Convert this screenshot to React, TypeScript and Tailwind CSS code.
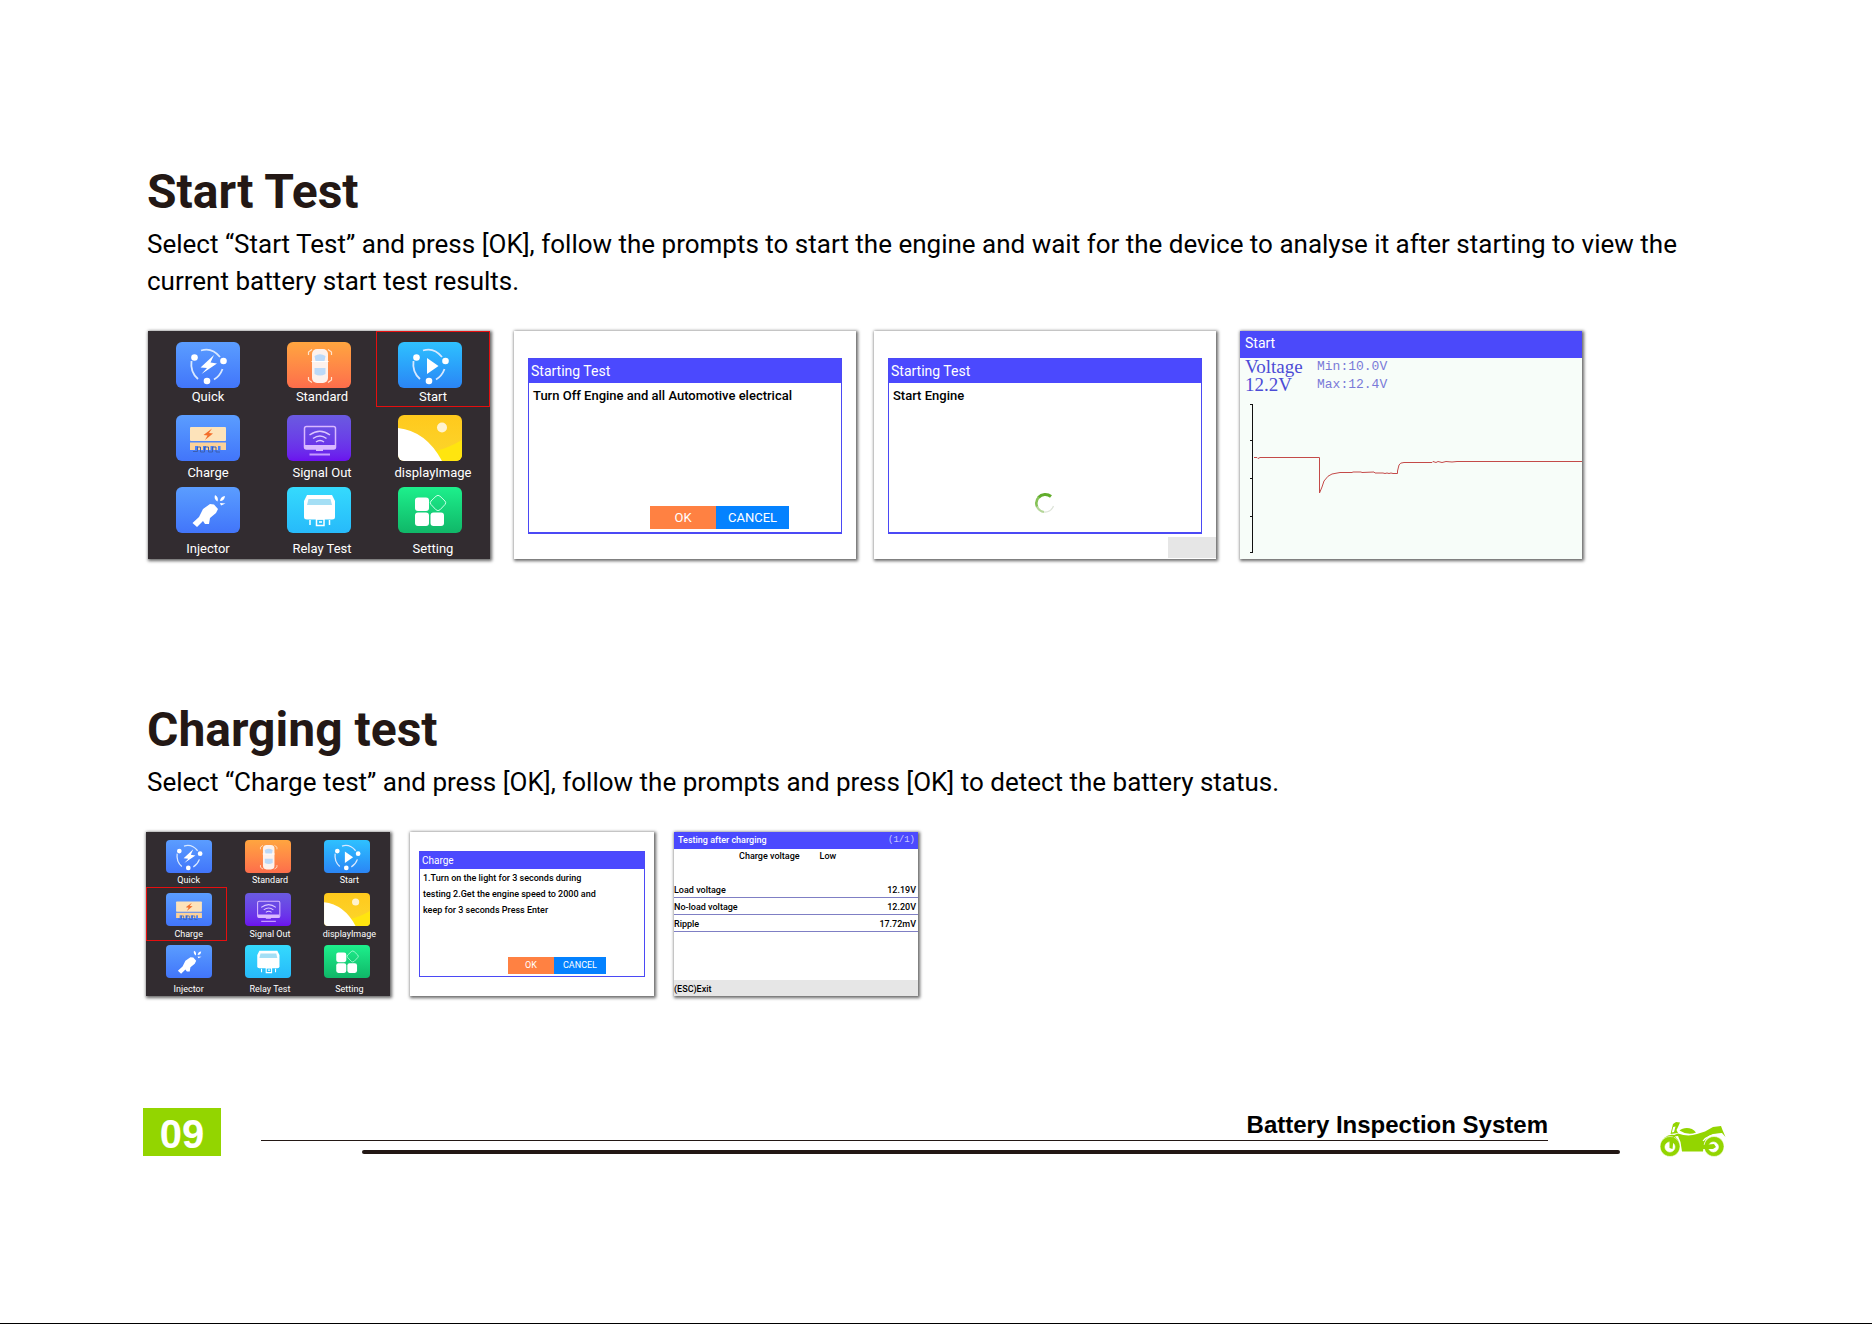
import type { ReactNode } from "react";
import clsx from "clsx";

type Size = "lg" | "sm";

export default function App() {
  return (
    <div className="flex min-h-screen flex-col border-b border-black bg-white font-['Roboto',sans-serif] text-black">
      <main className="px-[147px] pt-[162px]">
        <section>
          <Heading>Start Test</Heading>
          <Paragraph>
            Select “Start Test” and press [OK], follow the prompts to start the engine and wait for
            the device to analyse it after starting to view the current battery start test results.
          </Paragraph>
          <div className="mt-[31px] ml-px flex flex-wrap gap-6">
            <MenuScreen size="lg" selected="Start" />
            <div className="flex gap-[18px]">
              <DialogScreen size="lg" title="Starting Test" actions>
                Turn Off Engine and all Automotive electrical
              </DialogScreen>
              <DialogScreen size="lg" title="Starting Test" busy>
                Start Engine
              </DialogScreen>
            </div>
            <ChartScreen />
          </div>
        </section>

        <section className="mt-[141px]">
          <Heading>Charging test</Heading>
          <Paragraph>
            Select “Charge test” and press [OK], follow the prompts and press [OK] to detect the
            battery status.
          </Paragraph>
          <div className="mt-[31px] -ml-px flex flex-wrap gap-5">
            <MenuScreen size="sm" selected="Charge" />
            <DialogScreen size="sm" title="Charge" actions>
              1.Turn on the light for 3 seconds during
              <br />
              testing 2.Get the engine speed to 2000 and
              <br />
              keep for 3 seconds Press Enter
            </DialogScreen>
            <ResultScreen />
          </div>
        </section>
      </main>
      <PageFooter />
    </div>
  );
}

function Heading({ children }: { children: ReactNode }) {
  return <h2 className="text-[48px] leading-[60px] font-bold text-[#231815]">{children}</h2>;
}

function Paragraph({ children }: { children: ReactNode }) {
  return <p className="mt-1 text-[26px] leading-[37px]">{children}</p>;
}

function Screen({
  size,
  className,
  children
}: {
  size: Size;
  className?: string;
  children: ReactNode;
}) {
  return (
    <div
      className={clsx(
        "flex shrink-0 flex-col shadow-[1px_1px_3px_1px_rgba(0,0,0,0.6)]",
        size === "lg" ? "h-[228px] w-[342px]" : "h-[164px] w-[244px]",
        className
      )}
    >
      {children}
    </div>
  );
}

const TILES = [
  { label: "Quick", bg: "bg-linear-to-b from-[#5b9dff] to-[#4275fa]", art: <QuickArt /> },
  { label: "Standard", bg: "bg-linear-to-b from-[#ffa53f] to-[#fd6d4b]", art: <CarArt /> },
  { label: "Start", bg: "bg-linear-to-b from-[#2fc1ff] to-[#2b85f5]", art: <StartArt /> },
  { label: "Charge", bg: "bg-linear-to-b from-[#5b9dff] to-[#4275fa]", art: <ChargeArt /> },
  { label: "Signal Out", bg: "bg-linear-to-b from-[#6a5ae0] to-[#6b10ee]", art: <SignalArt /> },
  { label: "displayImage", bg: "bg-linear-to-b from-[#ffc91c] to-[#fbd62c]", art: <ImageArt /> },
  { label: "Injector", bg: "bg-linear-to-b from-[#5b9dff] to-[#4275fa]", art: <InjectorArt /> },
  { label: "Relay Test", bg: "bg-linear-to-b from-[#35dafd] to-[#27bafa]", art: <RelayArt /> },
  { label: "Setting", bg: "bg-linear-to-b from-[#1df08c] to-[#10b768]", art: <SettingArt /> }
];

// The device nudges each row and column of its grid a little towards the middle.
const ROW_PAD = {
  lg: ["pt-[11px]", "pt-2", "pt-1"],
  sm: ["pt-2", "pt-1.5", "pt-1"]
};
const COLUMN_PAD = {
  lg: ["pl-1.5", "", "pr-1.5"],
  sm: ["pl-1", "", "pr-1"]
};

function MenuScreen({ size, selected }: { size: Size; selected: string }) {
  const lg = size === "lg";
  return (
    <Screen size={size} className="bg-[#322c30]">
      <div className="grid flex-1 grid-cols-3 grid-rows-3">
        {TILES.map((tile, i) => (
          <button
            key={tile.label}
            type="button"
            className={clsx(
              "flex min-w-0 flex-col items-center outline-1 -outline-offset-1",
              tile.label === selected ? "outline-[#e60f0f]" : "outline-transparent",
              ROW_PAD[size][Math.floor(i / 3)],
              COLUMN_PAD[size][i % 3]
            )}
          >
            <span
              className={clsx(
                "block shrink-0 overflow-hidden",
                lg ? "h-[46px] w-16 rounded-md" : "h-[33px] w-[46px] rounded-sm",
                tile.bg
              )}
            >
              <svg viewBox="0 0 64 46" className="block size-full" aria-hidden="true">
                {tile.art}
              </svg>
            </span>
            <span
              className={clsx(
                "mt-auto whitespace-nowrap text-white",
                lg ? "pb-[3px] text-[13px] leading-[14px]" : "pb-0.5 text-[9px] leading-[10px]",
                i % 3 > 0 && (lg ? "pl-1.5" : "pl-1")
              )}
            >
              {tile.label}
            </span>
          </button>
        ))}
      </div>
    </Screen>
  );
}

function DialogScreen({
  size,
  title,
  actions,
  busy,
  children
}: {
  size: Size;
  title: string;
  actions?: boolean;
  busy?: boolean;
  children: ReactNode;
}) {
  const lg = size === "lg";
  return (
    <Screen size={size} className="bg-white">
      <div
        className={clsx(
          "flex flex-col border border-[#4b49f5]",
          lg ? "mx-3.5 mt-[27px] h-44 border-b-2" : "mx-[9px] mt-[19px] h-[126px]"
        )}
      >
        <h3
          className={clsx(
            "bg-[#4b49fe] pl-0.5 text-white",
            lg ? "h-6 text-[14px] leading-6" : "h-[17px] text-[10px] leading-[17px]"
          )}
        >
          {title}
        </h3>
        <p
          className={clsx(
            "font-medium whitespace-nowrap",
            lg ? "mt-1 pl-1 text-[13px] leading-[18px]" : "mt-px pl-[3px] text-[9px] leading-4"
          )}
        >
          {children}
        </p>
        {actions ? (
          <div
            className={clsx(
              "mt-auto flex justify-end text-white",
              lg
                ? "mr-[52px] mb-[3px] h-[23px] text-[13px]"
                : "mr-[38px] mb-0.5 h-[17px] text-[9px]"
            )}
          >
            <button type="button" className={clsx("bg-[#ff8142]", lg ? "w-[66px]" : "w-[46px]")}>
              OK
            </button>
            <button type="button" className={clsx("bg-[#0482ff]", lg ? "w-[73px]" : "w-[52px]")}>
              CANCEL
            </button>
          </div>
        ) : null}
        {busy ? (
          <svg viewBox="0 0 22 22" className="mx-auto mt-auto mb-[18px] size-[22px]" aria-label="Working">
            <g fill="none">
              <path d="M17 4.5A9 9 0 0 0 4.5 5.5" stroke="#62ad2c" strokeWidth="3" />
              <path d="M4.8 5.2A9 9 0 0 0 3.2 15" stroke="#86c257" strokeWidth="2.6" />
              <path d="M3 14.5A9 9 0 0 0 10 20" stroke="#b4d698" strokeWidth="2" />
              <path d="M10 20A9 9 0 0 0 19.5 14" stroke="#dde3d8" strokeWidth="1.2" />
            </g>
          </svg>
        ) : null}
      </div>
      {busy ? <div className="mt-[3px] ml-auto h-[21px] w-12 bg-[#e6e6e6]" /> : null}
    </Screen>
  );
}

function ChartScreen() {
  return (
    <Screen size="lg" className="bg-[#f7fdf9]">
      <h3 className="h-[27px] bg-[#4b49fa] pl-[5px] text-[14px] leading-6 text-white">Start</h3>
      <div className="flex gap-3 pl-[5px] text-[#4c4cd6]">
        <p className="w-[60px] font-['Liberation_Serif',serif] text-[19px] leading-[18px]">
          Voltage
          <br />
          12.2V
        </p>
        <p className="font-['Liberation_Mono',monospace] text-[13px] leading-[18px] text-[#7a7ad8]">
          Min:10.0V
          <br />
          Max:12.4V
        </p>
      </div>
      <svg viewBox="0 0 342 164" className="mt-auto block w-full" aria-label="Voltage over time">
        <path
          d="M12.5 9V158M10 9.5H12M10 45.5H12M10 83.5H12M10 121.5H12M10 157.5H12"
          stroke="#111"
          fill="none"
        />
        <path
          d="M14 62.5H17L18 63.5L20 62.5H79.5V98L82 92L84 86Q88 80 92 79L100 77.5H112L113 77H121L122 77.5L134 77L135 78H143L145 78.5L147 78L149 78.5L151 78L153 78.5H157.5V76L159 70Q160 67.5 164 67.5H192L193 66.5L196 67.5L198 66.5L202 67.5L206 66.5L212 67L217 66.5H342"
          fill="none"
          stroke="#c44a49"
        />
      </svg>
    </Screen>
  );
}

const READINGS = [
  ["Load voltage", "12.19V"],
  ["No-load voltage", "12.20V"],
  ["Ripple", "17.72mV"]
];

function ResultScreen() {
  return (
    <Screen size="sm" className="bg-white text-[9px] font-medium">
      <div className="flex h-[17px] items-center justify-between bg-[#4b49fe] pr-[3px] pl-1 text-white">
        <h3>Testing after charging</h3>
        <span className="font-['Liberation_Mono',monospace] font-normal text-[#c9c8ff]">(1/1)</span>
      </div>
      <div className="flex gap-5 pl-[65px] leading-[14px]">
        <span>Charge voltage</span>
        <span>Low</span>
      </div>
      <table className="mt-[18px] w-full border-collapse">
        <tbody>
          {READINGS.map(([label, value]) => (
            <tr key={label} className="border-b border-[#7f7fc4]">
              <th scope="row" className="pt-0.5 text-left leading-[14px] font-medium">
                {label}
              </th>
              <td className="pt-0.5 pr-0.5 text-right leading-[14px]">{value}</td>
            </tr>
          ))}
        </tbody>
      </table>
      <div className="mt-auto h-4 bg-[#e6e6e6] leading-[18px]">(ESC)Exit</div>
    </Screen>
  );
}

function PageFooter() {
  return (
    <footer className="mt-[112px] flex items-start pr-[146px] pl-[143px]">
      <div className="h-12 w-[78px] bg-[#93d500] text-center font-['Liberation_Sans',sans-serif] text-[40px] leading-[53px] font-bold text-white">
        09
      </div>
      <div className="mx-10 flex-1">
        <p className="mr-[72px] border-b border-[#231815] pt-0.5 text-right font-['Liberation_Sans',sans-serif] text-[24px] leading-[30px] font-bold">
          Battery Inspection System
        </p>
        <div className="mt-[9px] ml-[101px] h-1 rounded-full bg-[#231815]" />
      </div>
      <svg viewBox="0 0 66 35" className="mt-3.5 h-[35px] w-[66px]" fill="#93d500" aria-hidden="true">
        <path d="M13 2 16 0 20 .5 18 5 16.5 8 18 11 10.5 12Z" />
        <path d="M13.2 5 15.5 4.5 14 10 11.8 10.5Z" fill="#fff" />
        <path d="M19.5 8.5C23 5 32 4.5 36 10.5Q28 14 19.5 8.5Z" />
        <path d="M18 11.5Q28 15 37 12L45 9.5 53 5 61 4 62.5 8 65.5 15 62 11 53 12Q46 14 44 22L43 29.5H22L20.5 20 18 14 9 15Z" />
        <path d="M4 16Q9 12 14 13L18 18 20 25 18 27 14 18Z" />
        <path
          d="M10 14.5a10 10 0 1 0 .1 0ZM10 20a5 5 0 1 1-.1 0Z"
          fillRule="evenodd"
          stroke="#fff"
          strokeWidth=".6"
        />
        <path d="M9.5 20 14 13.5 12.5 27 9.5 26Z" />
        <path
          d="M54 14.5a10 10 0 1 0 .1 0ZM53.5 20a5 5 0 1 1-.1 0Z"
          fillRule="evenodd"
          stroke="#fff"
          strokeWidth=".6"
        />
        <path d="M42 23 54 22 56 25 53 27 42 27Z" />
        <path d="M43 19Q48 12 62 12" fill="none" stroke="#fff" strokeWidth="1.2" />
      </svg>
    </footer>
  );
}

function Orbit() {
  return (
    <>
      <path
        d="M25 8.5Q36 5 44 15M15.5 19Q14 30 22 37M46.5 27Q44 34 38 37.5"
        fill="none"
        stroke="#d8e8ff"
        strokeWidth="1.8"
      />
      <g fill="#fff">
        <circle cx="18.5" cy="15.5" r="3.3" />
        <circle cx="47.5" cy="19" r="3.3" />
        <circle cx="31" cy="39" r="3.3" />
      </g>
    </>
  );
}

function QuickArt() {
  return (
    <>
      <Orbit />
      <path d="M38 13 24.5 25.5 31 26 25.5 32 41 21.5 34.5 20.5Z" fill="#fff" />
    </>
  );
}

function StartArt() {
  return (
    <>
      <Orbit />
      <path d="M29 16V32L40.5 24Z" fill="#fff" />
    </>
  );
}

function CarArt() {
  return (
    <>
      <path
        d="M21.5 13V10L25 7.5M41 7.5 44.5 10V13M21.5 35V38L25 40.5M41 40.5 44.5 38V35"
        fill="none"
        stroke="#ffe3cc"
        strokeWidth="1.2"
      />
      <rect x="25" y="7" width="16" height="34" rx="5" fill="#fdf1ec" />
      <path d="M27.5 14Q33 10.5 38.5 14L37.5 19H28.5ZM27.5 26H38.5V32Q33 35 27.5 32Z" fill="#bcd9f8" />
      <path d="M24.5 19.5H41.5" stroke="#fff" />
    </>
  );
}

function ChargeArt() {
  return (
    <>
      <rect x="14" y="12" width="36" height="14" rx="1" fill="#fde3ba" />
      <path
        d="M14 27.5H50V35H44.5V31H42V35H37.5V31H34.5V35H30V31H27V35H22V31H19V35H14Z"
        fill="#fbd199"
      />
      <path
        d="M17 36.5H21.5V32H24.5V37H28.5V32H32.5V37H36.5V32H40V37H44"
        fill="none"
        stroke="#3d5fae"
      />
      <path d="M36 13.5 27.5 20 31.5 20.5 29 25 37 18.5 33 18Z" fill="#f36f2c" />
    </>
  );
}

function SignalArt() {
  return (
    <>
      <rect
        x="17.5"
        y="11.5"
        width="31"
        height="22.5"
        rx="2"
        fill="none"
        stroke="#d9b8ff"
        strokeWidth="1.5"
      />
      <path d="M18 30H48V34H36V36H29V34H18Z" fill="#d9b8ff" />
      <path d="M22.5 39.5H43" stroke="#c59bff" strokeWidth="1.8" />
      <path
        d="M22.5 20Q33 12.5 43 20M26 23.5Q33 18.5 39.5 23.5M29 27Q33 24 37 27"
        fill="none"
        stroke="#dcc6ff"
        strokeWidth="1.5"
      />
    </>
  );
}

function ImageArt() {
  return (
    <>
      <path d="M38 36Q50 33 64 25V46H38Z" fill="#ffe50f" />
      <path d="M0 13Q28 16 44 46H0Z" fill="#fff" />
      <circle cx="44" cy="12.5" r="5" fill="#fff3cf" />
    </>
  );
}

function InjectorArt() {
  return (
    <g fill="#fff">
      <path d="M16.5 36 23 30 27 22 34 17 38 17.5 42 22 40 26 34 31 33 37 29 37 27 34 21 40Z" />
      <path d="M39 8Q43 10 41.5 14.5 37.5 12 39 8ZM49 9Q48.500 14 44 14 44.5 9.5 49 9ZM44 16 49.5 16.5 45 18.5Z" />
    </g>
  );
}

function RelayArt() {
  return (
    <>
      <path d="M20 8H45L48 14V30Q48 32.5 45 32.5H20Q17 32.5 17 30V14Z" fill="#fff" />
      <path d="M21.5 12H43.5L45 18H20Z" fill="#a4dff5" />
      <path
        d="M23 33V38M42.5 33V38M29.5 32H37V38.5H29.5ZM32 35H35"
        fill="none"
        stroke="#fff"
        strokeWidth="1.5"
      />
    </>
  );
}

function SettingArt() {
  return (
    <>
      <g fill="#fff">
        <rect x="17" y="10.5" width="14" height="13.5" rx="3" />
        <rect x="17" y="25.5" width="14" height="13.5" rx="3" />
        <rect x="32.5" y="25.5" width="13.5" height="13.5" rx="3" />
      </g>
      <path
        d="M38 9.2Q40 7.4 42 9.2L47 14Q48.5 15.8 47 17.5L42 22.8Q40 24.5 38 22.8L33 17.5Q31.5 15.8 33 14Z"
        fill="none"
        stroke="#c9ffe6"
      />
    </>
  );
}
